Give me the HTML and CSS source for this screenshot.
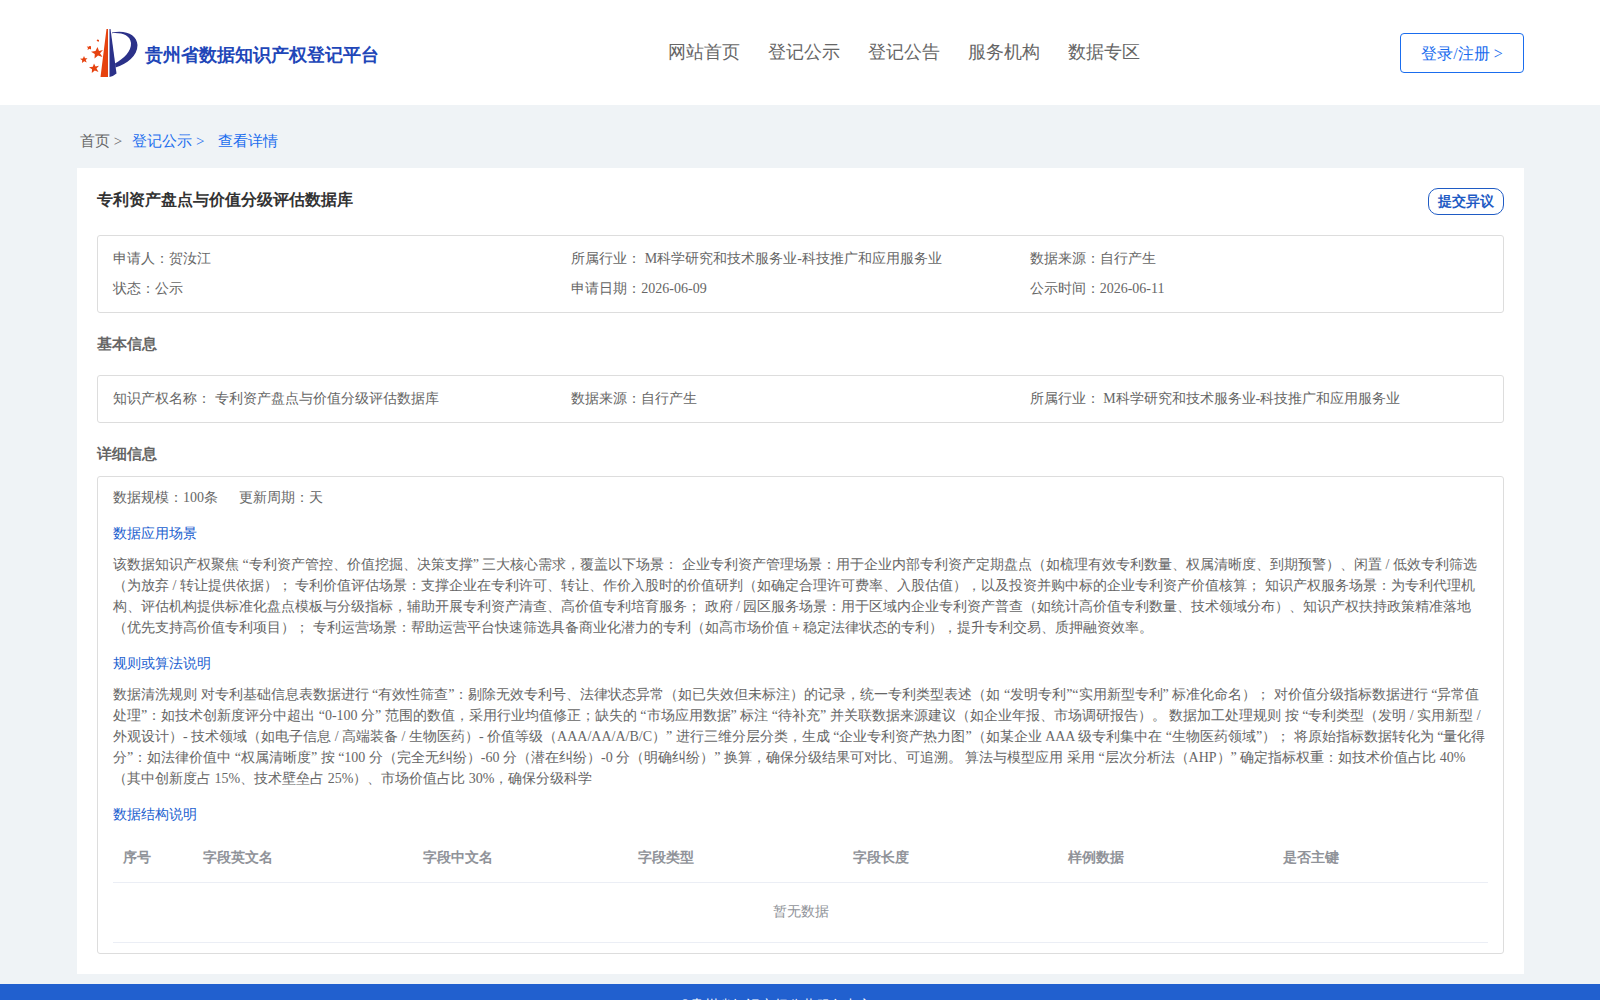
FILE: index.html
```
<!DOCTYPE html>
<html lang="en">
<head>
  <meta charset="UTF-8">
  <meta name="viewport" content="width=device-width, initial-scale=1.0">
  <title>贵州省数据知识产权登记平台</title>
  <link rel="stylesheet" href="styles.css">
</head>
<body>
  <header class="header">
    <a class="logo" href="#">
      <svg class="logo-icon" viewBox="0 0 58 50" aria-hidden="true">
        <path fill="#e6420f" d="M26.5 1 L28 1 L28 49 L20.500 49 Z"/>
        <path fill="#2b3189" d="M29.500 1 L30.500 1 L36.500 45.500 Q33 48.500 29.500 49 Z"/>
        <path fill="#2b3189" d="M32 4.500 C46 1.500 57 7 57.500 17 C57.500 28 47 36 35.500 39.500 L35 35.500 C44 30.500 51.500 23 51 15 C50 7 42 4.500 32 5.200 Z"/>
        <g fill="#e6420f">
          <path d="M17.500 19 L19 23 L23 22 L20 25.300 L22.500 29 L18 27.500 L14.500 30.500 L14.800 26 L11 23.800 L15.500 23 Z"/>
          <path d="M14 35.500 L15.500 38.500 L19 37.800 L16.500 40.500 L18.500 44 L14.800 42.500 L11.800 45 L12 41.300 L9 39.300 L12.800 38.800 Z"/>
          <path d="M4 28 L5 30.300 L7.500 30.200 L5.700 32 L6.700 34.500 L4.200 33.300 L2 35 L2.200 32.300 L0 30.800 L2.900 30.500 Z"/>
          <path d="M9.500 18 L11 18.300 L11 21.500 L9.500 20.700 L7.500 22 L8 20 L6.700 18.600 L8.600 18.700 Z"/>
          <path d="M17.500 11.500 L19 12 L18.800 13.700 L17.300 13.300 L16.600 12.300 Z"/>
        </g>
      </svg>
      <span class="logo-text">贵州省数据知识产权登记平台</span>
    </a>
    <nav class="nav">
      <a href="#">网站首页</a>
      <a href="#">登记公示</a>
      <a href="#">登记公告</a>
      <a href="#">服务机构</a>
      <a href="#">数据专区</a>
    </nav>
    <button class="login-button" type="button">登录/注册 &gt;</button>
  </header>

  <main class="main">
    <div class="breadcrumb">
      <a class="crumb-home" href="#">首页 &gt;</a>
      <a href="#">登记公示 &gt;</a>
      <a class="crumb-current" href="#">查看详情</a>
    </div>

    <div class="card">
      <div class="card-header">
        <h1>专利资产盘点与价值分级评估数据库</h1>
        <button class="objection-button" type="button">提交异议</button>
      </div>

      <div class="box info-grid">
        <div>申请人：贺汝江</div>
        <div>所属行业： M科学研究和技术服务业-科技推广和应用服务业</div>
        <div>数据来源：自行产生</div>
        <div>状态：公示</div>
        <div>申请日期：2026-06-09</div>
        <div>公示时间：2026-06-11</div>
      </div>

      <h2 class="basic-title">基本信息</h2>
      <div class="box info-grid">
        <div>知识产权名称： 专利资产盘点与价值分级评估数据库</div>
        <div>数据来源：自行产生</div>
        <div>所属行业： M科学研究和技术服务业-科技推广和应用服务业</div>
      </div>

      <h2 class="detail-title">详细信息</h2>
      <div class="box detail">
        <div class="scale">
          <span>数据规模：100条</span>
          <span>更新周期：天</span>
        </div>

        <h3>数据应用场景</h3>
        <p>该数据知识产权聚焦 “专利资产管控、价值挖掘、决策支撑” 三大核心需求，覆盖以下场景： 企业专利资产管理场景：用于企业内部专利资产定期盘点（如梳理有效专利数量、权属清晰度、到期预警）、闲置 / 低效专利筛选（为放弃 / 转让提供依据）； 专利价值评估场景：支撑企业在专利许可、转让、作价入股时的价值研判（如确定合理许可费率、入股估值），以及投资并购中标的企业专利资产价值核算； 知识产权服务场景：为专利代理机构、评估机构提供标准化盘点模板与分级指标，辅助开展专利资产清查、高价值专利培育服务； 政府 / 园区服务场景：用于区域内企业专利资产普查（如统计高价值专利数量、技术领域分布）、知识产权扶持政策精准落地（优先支持高价值专利项目）； 专利运营场景：帮助运营平台快速筛选具备商业化潜力的专利（如高市场价值 + 稳定法律状态的专利），提升专利交易、质押融资效率。</p>

        <h3>规则或算法说明</h3>
        <p>数据清洗规则 对专利基础信息表数据进行 “有效性筛查”：剔除无效专利号、法律状态异常（如已失效但未标注）的记录，统一专利类型表述（如 “发明专利”“实用新型专利” 标准化命名）； 对价值分级指标数据进行 “异常值处理”：如技术创新度评分中超出 “0-100 分” 范围的数值，采用行业均值修正；缺失的 “市场应用数据” 标注 “待补充” 并关联数据来源建议（如企业年报、市场调研报告）。 数据加工处理规则 按 “专利类型（发明 / 实用新型 / 外观设计）- 技术领域（如电子信息 / 高端装备 / 生物医药）- 价值等级（AAA/AA/A/B/C）” 进行三维分层分类，生成 “企业专利资产热力图”（如某企业 AAA 级专利集中在 “生物医药领域”）； 将原始指标数据转化为 “量化得分”：如法律价值中 “权属清晰度” 按 “100 分（完全无纠纷）-60 分（潜在纠纷）-0 分（明确纠纷）” 换算，确保分级结果可对比、可追溯。 算法与模型应用 采用 “层次分析法（AHP）” 确定指标权重：如技术价值占比 40%（其中创新度占 15%、技术壁垒占 25%）、市场价值占比 30%，确保分级科学</p>

        <h3>数据结构说明</h3>
        <table class="table">
          <thead>
            <tr>
              <th class="col-index">序号</th>
              <th class="col-name">字段英文名</th>
              <th>字段中文名</th>
              <th>字段类型</th>
              <th>字段长度</th>
              <th>样例数据</th>
              <th>是否主键</th>
            </tr>
          </thead>
          <tbody>
            <tr>
              <td class="empty" colspan="7">暂无数据</td>
            </tr>
          </tbody>
        </table>
      </div>
    </div>
  </main>

  <footer class="footer">
    <p>©贵州省知识产权公共服务中心</p>
  </footer>
</body>
</html>
```
FILE: styles.css
```
* {
  box-sizing: border-box;
}

body {
  font-family: "Liberation Serif", serif;
  margin: 0;
  font-size: 14px;
  color: #666;
  background: #eff3f6;
}

h1, h2, h3, p {
  margin: 0;
}

a {
  text-decoration: none;
  color: inherit;
}

button {
  font-family: inherit;
  background: #fff;
  cursor: pointer;
}

.header {
  display: flex;
  align-items: center;
  justify-content: space-between;
  height: 105px;
  padding: 0 76px 0 80px;
  background: #fff;
}

.logo {
  display: flex;
  align-items: center;
  gap: 7px;
  font-size: 18px;
  font-weight: bold;
  color: #2146b8;
}

.logo-icon {
  width: 58px;
  height: 50px;
}

.logo-text {
  padding-top: 4px;
}

.nav {
  padding-bottom: 2px;
  font-size: 18px;
  display: flex;
}

.nav a {
  margin-left: 28px;
}

.login-button {
  width: 124px;
  height: 40px;
  padding: 3px 0 0;
  font-size: 16px;
  color: #1a6dee;
  border: 1px solid #1a6dee;
  border-radius: 4px;
}

.main {
  padding: 0 76px 10px 77px;
}

.breadcrumb {
  display: flex;
  align-items: center;
  gap: 10px;
  height: 63px;
  padding: 10px 3px 0;
  font-size: 15px;
  color: #1a6dee;
}

.crumb-home {
  color: #666;
}

.crumb-current {
  margin-left: 4px;
}

.card {
  padding: 20px;
  background: #fff;
}

.card-header {
  display: flex;
  align-items: flex-start;
  justify-content: space-between;
  height: 47px;
}

.card-header h1 {
  font-size: 16px;
  line-height: 24px;
  color: #333;
}

.objection-button {
  width: 76px;
  height: 27px;
  padding: 0;
  font-size: 14px;
  font-weight: bold;
  color: #1f5bc4;
  border: 1px solid #1f5bc4;
  border-radius: 10px;
}

.box {
  padding: 8px 15px;
  border: 1px solid #ddd;
  border-radius: 3px;
}

.info-grid {
  display: grid;
  grid-template-columns: repeat(3, 1fr);
  line-height: 30px;
}

h2 {
  font-size: 15px;
  line-height: 22px;
}

.basic-title {
  padding: 20px 0;
}

.detail-title {
  padding: 20px 0 11px;
}

.detail {
  padding: 10px 15px;
}

.scale {
  display: flex;
  gap: 21px;
  line-height: 21px;
}

.detail h3 {
  margin: 15px 0 10px;
  font-size: 14px;
  font-weight: normal;
  line-height: 21px;
  color: #2160cf;
}

.detail p {
  line-height: 21px;
}

.table {
  width: 100%;
  table-layout: fixed;
  border-collapse: collapse;
  color: #909399;
}

.table th {
  height: 47px;
  padding: 0 10px;
  text-align: left;
  border-bottom: 1px solid #ebeef5;
}

.table .col-index {
  width: 80px;
}

.table .col-name {
  width: 16%;
}

.table .empty {
  height: 60px;
  padding: 0;
  text-align: center;
  border-bottom: 1px solid #ebeef5;
}

.footer {
  padding: 11px 48px 20px 0;
  text-align: center;
  line-height: 21px;
  color: #fff;
  background: #2160cf;
}
```
